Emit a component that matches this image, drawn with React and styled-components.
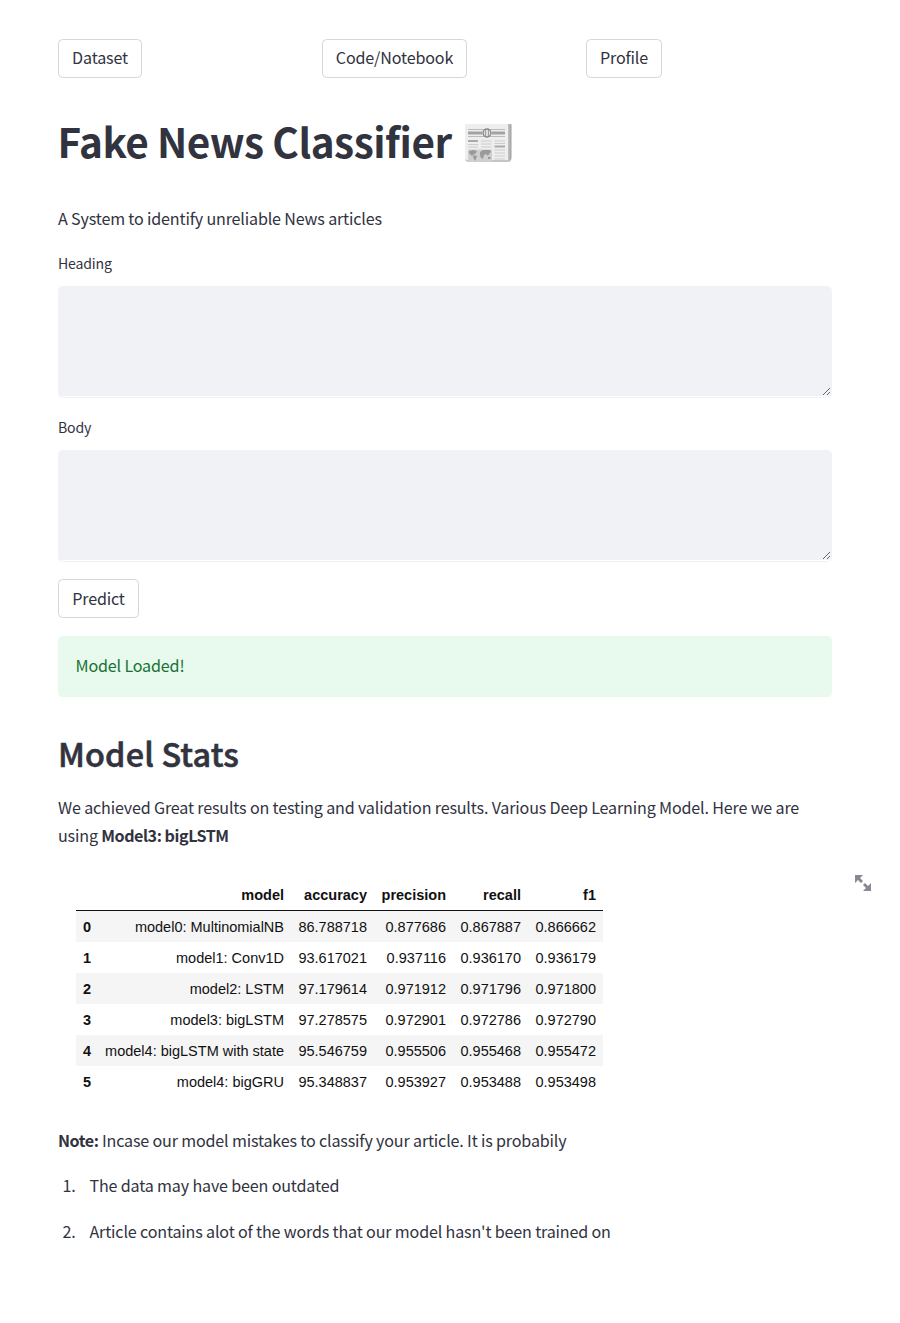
import React from "react";
import styled, { createGlobalStyle } from "styled-components";

const Global = createGlobalStyle`
  *, *::before, *::after { box-sizing: border-box; }
  body {
    margin: 0;
    background: #fff;
    color: #31333f;
    font-family: "Noto Sans CJK SC", "Noto Sans", sans-serif;
    font-size: 16.1px;
    line-height: 28px;
    letter-spacing: -0.163px;
  }
  strong { letter-spacing: -0.45px; }
`;

const Page = styled.main`
  width: 774px;
  height: 1323px;
  margin-left: 58px;
  padding-top: 39px;
  display: flex;
  flex-direction: column;
`;

const Columns = styled.div`
  display: grid;
  grid-template-columns: repeat(3, 1fr);
  gap: 18px;
`;

const Button = styled.button`
  justify-self: start;
  align-self: flex-start;
  width: ${(p) => p.$width}px;
  height: 39px;
  padding: 0 0 3px;
  border: 1px solid #d6d6d9;
  border-radius: 4.5px;
  background: #fff;
  color: inherit;
  font: inherit;
  letter-spacing: inherit;
  line-height: 28px;
  white-space: nowrap;
`;

const PredictButton = styled(Button)`
  margin-top: 17px;
  padding-bottom: 1px;
`;

const Title = styled.h1`
  margin: 33px 0 0 -0.5px;
  height: 60px;
  display: flex;
  align-items: flex-start;
  gap: 12.500px;
  font-size: 40.5px;
  font-weight: 700;
  line-height: 59px;
  letter-spacing: -0.5px;
  white-space: nowrap;

  svg { margin-top: 12px; }
`;

const Intro = styled.p`
  margin: 33px 0 0;
`;

const Label = styled.label`
  margin-top: ${(p) => p.$top}px;
  height: 22px;
  font-size: 14.1px;
  line-height: 22px;
`;

const Field = styled.div`
  margin-top: 12px;
  height: 112px;
  border: 1px solid #f0f2f6;
  border-radius: 4.5px;
  overflow: hidden;
`;

const TextArea = styled.textarea`
  display: block;
  width: 100%;
  height: 109px;
  margin: 0;
  padding: 14px;
  border: 0;
  outline: 0;
  background: #f0f2f6;
  font: inherit;
  resize: vertical;
`;

const Alert = styled.div`
  margin-top: 18px;
  height: 61px;
  padding: 15px 17.500px;
  border-radius: 4.5px;
  background: #e8f9ee;
  color: #177233;
`;

const Heading = styled.h2`
  margin: 33px 0 0;
  font-size: 32.4px;
  font-weight: 500;
  line-height: 46px;
  letter-spacing: 0.15px;
  -webkit-text-stroke: 0.6px currentColor;
`;

const Text = styled.p`
  margin: ${(p) => p.$top}px 0 0;
`;

const Figure = styled.div`
  display: flex;
  justify-content: space-between;
  width: 813px;
  margin-top: 25px;
  padding-left: 18px;
`;

const Table = styled.table`
  width: 527px;
  table-layout: fixed;
  margin-top: 6px;
  border-collapse: collapse;
  color: #111;
  font-family: "Liberation Sans", Arial, sans-serif;
  font-size: 14.5px;
  letter-spacing: 0;
  line-height: 18px;
`;

const Cell = styled.td`
  padding: 0 7px 0 0;
  text-align: right;
  white-space: nowrap;
  font-weight: ${(p) => (p.$bold ? 700 : 400)};
`;

const HeadRow = styled.tr`
  height: 30px;
  border-bottom: 1.5px solid #111;
`;

const Row = styled.tr`
  height: ${(p) => (p.$first ? 32 : 31)}px;
  background: ${(p) => (p.$shaded ? "#f5f5f5" : "#fff")};

  td { padding-top: ${(p) => (p.$first ? 1 : 0)}px; }
`;

const Expand = styled.svg`
  flex: none;
`;

const List = styled.ol`
  margin: 17px 0 0;
  padding: 0;
  list-style: none;
  counter-reset: item;
`;

const Item = styled.li`
  display: flex;
  counter-increment: item;
  margin-bottom: 18px;
  &::before {
    content: counter(item) ".";
    width: 17.500px;
    margin-right: 14px;
    text-align: right;
  }
`;

const columns = [
  ["", 22], ["model", 193], ["accuracy", 83], ["precision", 79], ["recall", 75], ["f1", 75],
];

const rows = [
  ["0", "model0: MultinomialNB", "86.788718", "0.877686", "0.867887", "0.866662"],
  ["1", "model1: Conv1D", "93.617021", "0.937116", "0.936170", "0.936179"],
  ["2", "model2: LSTM", "97.179614", "0.971912", "0.971796", "0.971800"],
  ["3", "model3: bigLSTM", "97.278575", "0.972901", "0.972786", "0.972790"],
  ["4", "model4: bigLSTM with state", "95.546759", "0.955506", "0.955468", "0.955472"],
  ["5", "model4: bigGRU", "95.348837", "0.953927", "0.953488", "0.953498"],
];

const Newspaper = () => (
  <svg width="48" height="40" viewBox="0 0 48 40">
    <defs>
      <linearGradient id="edge" x1="0" x2="1">
        <stop offset="0" stopColor="#d8d8d8" />
        <stop offset="1" stopColor="#a0a0a0" />
      </linearGradient>
    </defs>
    <path d="M42 1h4.500q1 0 1 1v32q0 5-4 5H42z" fill="url(#edge)" />
    <path d="M2 1h42v34q0 3 2 3H4q-3 0-3-3V2q0-1 1-1z" fill="#eeeeee" />
    <path d="M1 35q0 4 4 4h39q2 0 3-2H4q-3 0-3-2z" fill="#c5c5c5" />
    <path d="M4 6.500h37M4 13.500h37" stroke="#bbb" strokeWidth="1" />
    <path d="M4 10h14M28 10h13" stroke="#a3a3a3" strokeWidth="3" />
    <circle cx="23" cy="10" r="4" fill="#ddd" stroke="#888" strokeWidth="1.4" />
    <path d="M21.500 7v6M24.500 7v6" stroke="#999" strokeWidth=".9" />
    <path d="M4 18h10M30.500 23.500h10.500" stroke="#aaa" strokeWidth="2" />
    <path d="M4 21.500h10M4 24h10M17 18h10.500M17 21h10.500M17 24h10.500M30.500 18h10.500M30.500 20.500h10.500M30.500 27h10.500M30.500 30h10.500M30.500 33h10.500M30.500 36h10.500" stroke="#cdcdcd" strokeWidth="1" />
    <path d="M4 26.500h24V39H5q-1 0-1-1z" fill="#cfcfcf" />
    <path d="M5 28l4-1 4 1-1 2-3 2-1 1-3-3zM10 32l3 1-1 3-1 2-2-4zM16 29l3-2 7 0 1 2-2 2-1 2-2-2-2 1-1 4-2-1-1-3zM24 34l3 0-1 2-2 0z" fill="#9a9a9a" />
  </svg>
);

export default function App() {
  return (
    <>
      <Global />
      <Page>
        <Columns>
          <Button $width={84}>Dataset</Button>
          <Button $width={145}>Code/Notebook</Button>
          <Button $width={76}>Profile</Button>
        </Columns>
        <Title>Fake News Classifier <Newspaper /></Title>
        <Intro>A System to identify unreliable News articles</Intro>
        <Label $top={20} htmlFor="heading">Heading</Label>
        <Field><TextArea id="heading" /></Field>
        <Label $top={18} htmlFor="body">Body</Label>
        <Field><TextArea id="body" /></Field>
        <PredictButton $width={81}>Predict</PredictButton>
        <Alert>Model Loaded!</Alert>
        <Heading>Model Stats</Heading>
        <Text $top={17}>
          We achieved Great results on testing and validation results. Various Deep Learning Model. Here we are
          using <strong>Model3: bigLSTM</strong>
        </Text>
        <Figure>
          <Table>
            <colgroup>{columns.map(([name, width]) => <col key={name} width={width} />)}</colgroup>
            <thead>
              <HeadRow>{columns.map(([name]) => <Cell as="th" key={name} $bold>{name}</Cell>)}</HeadRow>
            </thead>
            <tbody>
              {rows.map((row, i) => (
                <Row key={i} $first={i === 0} $shaded={i % 2 === 0}>
                  {row.map((value, j) => <Cell key={j} $bold={j === 0}>{value}</Cell>)}
                </Row>
              ))}
            </tbody>
          </Table>
          <Expand width="16" height="18" viewBox="0 0 8 8" fill="#868991">
            <path d="M0 0v4l1.500-1.500L3 4l1-1-1.500-1.500L4 0zM5 4L4 5l1.500 1.500L4 8h4V4L6.500 5.500z" />
          </Expand>
        </Figure>
        <Text $top={29}><strong>Note:</strong> Incase our model mistakes to classify your article. It is probabily</Text>
        <List>
          <Item>The data may have been outdated</Item>
          <Item>Article contains alot of the words that our model hasn't been trained on</Item>
        </List>
      </Page>
    </>
  );
}
